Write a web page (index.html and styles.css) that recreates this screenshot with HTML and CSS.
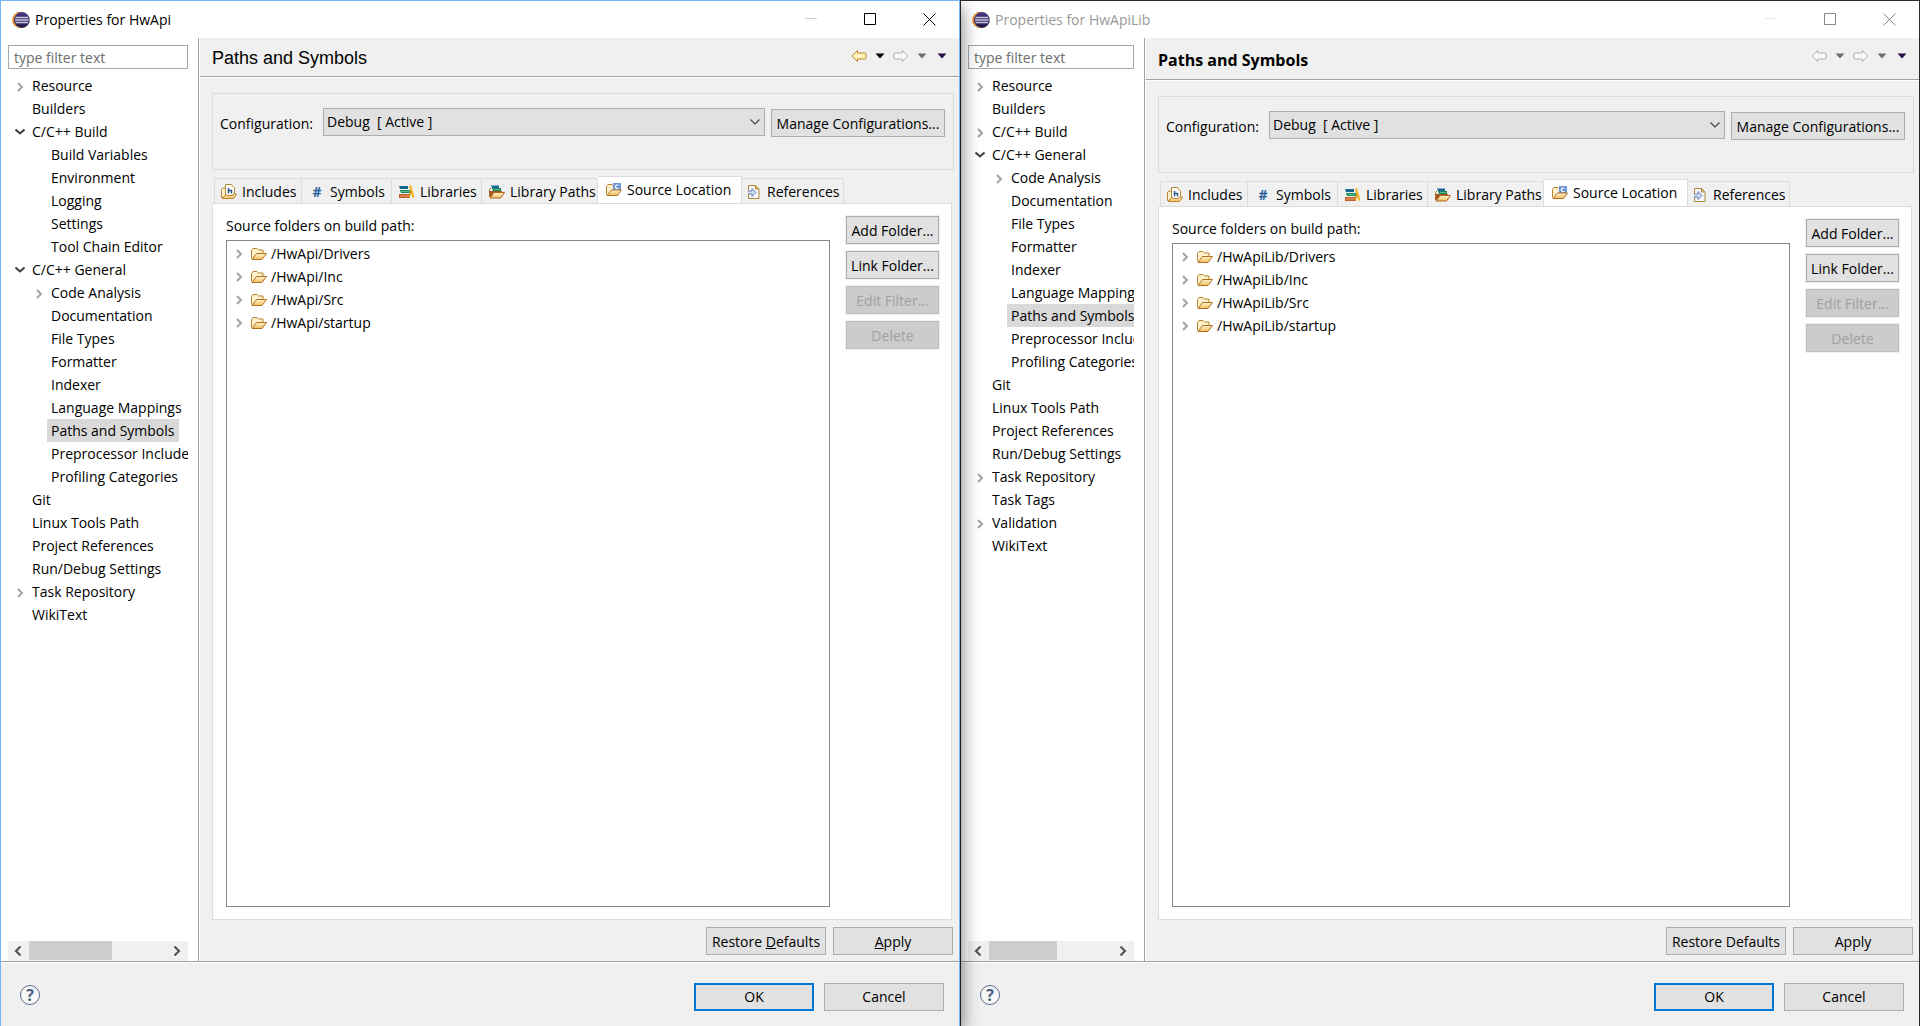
FILE: index.html
```html
<!DOCTYPE html>
<html lang="en">
<head>
<meta charset="utf-8">
<title>Properties</title>
<link rel="stylesheet" href="styles.css">
</head>
<body>
<svg class="sprite" aria-hidden="true">
  <defs>
    <linearGradient id="gold" x1="0" y1="0" x2="0" y2="1"><stop offset="0" stop-color="#fff3cf"/><stop offset="1" stop-color="#f0bd5e"/></linearGradient>
    <linearGradient id="globe" x1="0" y1="0" x2="0" y2="1"><stop offset="0" stop-color="#4a3c80"/><stop offset="1" stop-color="#241a48"/></linearGradient>
  </defs>
  <symbol id="eclipse" viewBox="0 0 18 18">
    <circle cx="8.500" cy="9" r="8.300" fill="#f08a1d"/><circle cx="10" cy="9" r="8" fill="#fbe3c4"/><circle cx="9.800" cy="9" r="7.900" fill="url(#globe)"/>
    <path d="M3.500 6.500h12.600M3 9h13.600M3.500 11.500h12.600" stroke="#c9c9e2" stroke-width="1.300"/>
  </symbol>
  <symbol id="right" viewBox="0 0 8 10"><path d="M2 1l4 4-4 4" fill="none" stroke="#a3a3a3" stroke-width="2"/></symbol>
  <symbol id="down" viewBox="0 0 10 8"><path d="M0.500 1.500l4.500 4 4.500-4" fill="none" stroke="#404040" stroke-width="2"/></symbol>
  <symbol id="scroll-left" viewBox="0 0 8 10"><path d="M6.500 0.500L2 5l4.500 4.500" fill="none" stroke="#555" stroke-width="2.200"/></symbol>
  <symbol id="scroll-right" viewBox="0 0 8 10"><path d="M1.500 0.500L6 5 1.500 9.500" fill="none" stroke="#555" stroke-width="2.200"/></symbol>
  <symbol id="arrow-back" viewBox="0 0 16 12"><path d="M1 6l5.500-5.500v2.500h7.500q1 0 1 1v4q0 1-1 1H6.500v2.500z" stroke-linejoin="round"/></symbol>
  <symbol id="arrow-fwd" viewBox="0 0 16 12"><path d="M15 6L9.500 0.500v2.500H2q-1 0-1 1v4q0 1 1 1h7.500v2.500z" stroke-linejoin="round"/></symbol>
  <symbol id="caret" viewBox="0 0 10 6"><path d="M0.500 0.500h9L5 5.500z"/></symbol>
  <symbol id="folder" viewBox="0 0 16 12">
    <path d="M0.500 10.500V2.500L2 0.500h4l1.500 1.500h4.500v3" fill="#fdf0cd" stroke="#b98228"/>
    <path d="M1 11.500h10l4.500-6H5.500z" fill="url(#gold)" stroke="#b0701e" stroke-linejoin="round"/>
  </symbol>
  <symbol id="includes" viewBox="0 0 16 16">
    <path d="M0.500 13.500V5.500l1.500-1.500h3v9z" fill="#fdf0cd" stroke="#b98228"/>
    <path d="M4.500 11.500V0.500h6l3 3v8z" fill="#fff" stroke="#b0893a"/><path d="M10.500 0.500v3h3z" fill="#e9cf95"/>
    <path d="M7.500 4v5.500M7.500 6.500h3v3" fill="none" stroke="#31588c" stroke-width="1.500"/>
    <path d="M1.500 14.500h11l3-4.500h-3l-1 1.500H6L5 10z" fill="url(#gold)" stroke="#b98228" stroke-linejoin="round"/>
  </symbol>
  <symbol id="libraries" viewBox="0 0 16 14">
    <path d="M0 1h9v3H1z" fill="#17658f"/><path d="M1 5h10v3H2z" fill="#178a55"/><path d="M3 6.500h7" stroke="#5fbf8f"/><path d="M0 9h11v4H0z" fill="#c0622c"/><path d="M1 11h9" stroke="#eea36e"/>
    <path d="M10 1l2-1 3.500 12-2 1z" fill="#f3b322"/><path d="M10 12l2-6" fill="none" stroke="#de9213" stroke-width="1.600"/>
  </symbol>
  <symbol id="libpaths" viewBox="0 0 16 14">
    <path d="M2 0.500h8v2.500H3z" fill="#176a9b"/><path d="M3 3h9v3H4z" fill="#168451"/><path d="M5 4.500h6" stroke="#5fbf8f"/>
    <path d="M0.500 12V4.500L2 3" fill="none" stroke="#b0651d"/><path d="M1 12V6h12v2" fill="#9f572c"/>
    <path d="M1 13h10.500l4-5.500H5z" fill="url(#gold)" stroke="#b0651d" stroke-linejoin="round"/>
  </symbol>
  <symbol id="source" viewBox="0 0 16 14">
    <path d="M0.500 11.500V3.500L2 1.500h4l1.500 1.500h5v4" fill="#fdf0cd" stroke="#b98228"/>
    <path d="M7 0h8v7H7z" fill="#6f97d8"/><path d="M12.500 2H10.500L9.500 3v1.500l1 1h2" fill="none" stroke="#fff" stroke-width="1.200"/>
    <path d="M1 12.500h10.500l4-5.500H5.500z" fill="url(#gold)" stroke="#b0701e" stroke-linejoin="round"/>
  </symbol>
  <symbol id="references" viewBox="0 0 12 14">
    <path d="M0.500 0.500h7l3.500 3.500v9.500H0.500z" fill="#f4f7fd" stroke="#ad8734"/><path d="M7.500 0.500v3.500h3.500z" fill="#f0d48c" stroke="#ad8734"/>
    <path d="M0 6h4V3.500L8 7.500l-4 4V9H0" fill="#cfdbf0" stroke="#6b83b0"/>
  </symbol>
  <symbol id="chevron" viewBox="0 0 10 6"><path d="M0.500 0.500L5 5 9.500 0.500" fill="none" stroke="#444" stroke-width="1.200"/></symbol>
  <symbol id="minimize" viewBox="0 0 13 13"><path d="M0 5.500h12" fill="none"/></symbol>
  <symbol id="maximize" viewBox="0 0 13 13"><path d="M0.500 0.500h11v11H0.500z" fill="none"/></symbol>
  <symbol id="close" viewBox="0 0 13 13"><path d="M0.500 0.500l12 12M12.500 0.500l-12 12" fill="none"/></symbol>
</svg>

<main class="desktop">
<section class="window window--active" aria-label="Properties for HwApi">
  <header class="titlebar">
    <svg class="app-icon"><use href="#eclipse"/></svg>
    <h1 class="window-title">Properties for HwApi</h1>
    <div class="window-controls">
      <button class="control control--off" aria-label="Minimize"><svg><use href="#minimize"/></svg></button>
      <button class="control" aria-label="Maximize"><svg><use href="#maximize"/></svg></button>
      <button class="control" aria-label="Close"><svg><use href="#close"/></svg></button>
    </div>
  </header>
  <div class="body">
    <nav class="sidebar">
      <input class="filter" type="text" placeholder="type filter text" aria-label="Filter">
      <ul class="tree">
        <li><span class="node"><svg class="twisty"><use href="#right"/></svg><span class="name">Resource</span></span></li>
        <li><span class="node"><span class="name">Builders</span></span></li>
        <li><span class="node"><svg class="twisty twisty--open"><use href="#down"/></svg><span class="name">C/C++ Build</span></span>
          <ul>
            <li><span class="node"><span class="name">Build Variables</span></span></li>
            <li><span class="node"><span class="name">Environment</span></span></li>
            <li><span class="node"><span class="name">Logging</span></span></li>
            <li><span class="node"><span class="name">Settings</span></span></li>
            <li><span class="node"><span class="name">Tool Chain Editor</span></span></li>
          </ul>
        </li>
        <li><span class="node"><svg class="twisty twisty--open"><use href="#down"/></svg><span class="name">C/C++ General</span></span>
          <ul>
            <li><span class="node"><svg class="twisty"><use href="#right"/></svg><span class="name">Code Analysis</span></span></li>
            <li><span class="node"><span class="name">Documentation</span></span></li>
            <li><span class="node"><span class="name">File Types</span></span></li>
            <li><span class="node"><span class="name">Formatter</span></span></li>
            <li><span class="node"><span class="name">Indexer</span></span></li>
            <li><span class="node"><span class="name">Language Mappings</span></span></li>
            <li><span class="node"><span class="name name--selected">Paths and Symbols</span></span></li>
            <li><span class="node"><span class="name">Preprocessor Include</span></span></li>
            <li><span class="node"><span class="name">Profiling Categories</span></span></li>
          </ul>
        </li>
        <li><span class="node"><span class="name">Git</span></span></li>
        <li><span class="node"><span class="name">Linux Tools Path</span></span></li>
        <li><span class="node"><span class="name">Project References</span></span></li>
        <li><span class="node"><span class="name">Run/Debug Settings</span></span></li>
        <li><span class="node"><svg class="twisty"><use href="#right"/></svg><span class="name">Task Repository</span></span></li>
        <li><span class="node"><span class="name">WikiText</span></span></li>
      </ul>
      <div class="scrollbar">
        <button class="scroll-button" aria-label="Scroll left"><svg><use href="#scroll-left"/></svg></button>
        <div class="track"><div class="thumb" style="width: 60%"></div></div>
        <button class="scroll-button" aria-label="Scroll right"><svg><use href="#scroll-right"/></svg></button>
      </div>
    </nav>
    <div class="page">
      <div class="page-header">
        <h2 class="page-title">Paths and Symbols</h2>
        <div class="history">
          <button class="nav nav--gold" aria-label="Back"><svg><use href="#arrow-back"/></svg></button>
          <button class="drop" aria-label="Back history"><svg><use href="#caret"/></svg></button>
          <button class="nav" aria-label="Forward" disabled><svg><use href="#arrow-fwd"/></svg></button>
          <button class="drop drop--off" aria-label="Forward history" disabled><svg><use href="#caret"/></svg></button>
          <button class="drop drop--menu" aria-label="Menu"><svg><use href="#caret"/></svg></button>
        </div>
      </div>
      <div class="page-content">
        <div class="group">
          <label class="config-label" for="config-1">Configuration:</label>
          <div class="combo"><select id="config-1"><option>Debug&nbsp; [ Active ]</option></select><svg><use href="#chevron"/></svg></div>
          <button class="button button--manage">Manage Configurations...</button>
        </div>
        <div class="tabs" role="tablist">
          <button class="tab tab--includes" role="tab"><svg><use href="#includes"/></svg>Includes</button>
          <button class="tab tab--symbols" role="tab"><span class="hash">#</span>Symbols</button>
          <button class="tab tab--libraries" role="tab"><svg><use href="#libraries"/></svg>Libraries</button>
          <button class="tab tab--paths" role="tab"><svg><use href="#libpaths"/></svg>Library Paths</button>
          <button class="tab tab--source tab--active" role="tab" aria-selected="true"><svg><use href="#source"/></svg>Source Location</button>
          <button class="tab tab--references" role="tab"><svg><use href="#references"/></svg>References</button>
        </div>
        <div class="panel" role="tabpanel">
          <div class="folders">
            <p class="caption">Source folders on build path:</p>
            <ul class="folder-list">
              <li><svg class="twisty"><use href="#right"/></svg><svg class="folder"><use href="#folder"/></svg>/HwApi/Drivers</li>
              <li><svg class="twisty"><use href="#right"/></svg><svg class="folder"><use href="#folder"/></svg>/HwApi/Inc</li>
              <li><svg class="twisty"><use href="#right"/></svg><svg class="folder"><use href="#folder"/></svg>/HwApi/Src</li>
              <li><svg class="twisty"><use href="#right"/></svg><svg class="folder"><use href="#folder"/></svg>/HwApi/startup</li>
            </ul>
          </div>
          <div class="side-buttons">
            <button class="button">Add Folder...</button>
            <button class="button">Link Folder...</button>
            <button class="button" disabled>Edit Filter...</button>
            <button class="button" disabled>Delete</button>
          </div>
        </div>
        <div class="page-actions">
          <button class="button button--wide">Restore <u>D</u>efaults</button>
          <button class="button button--wide"><u>A</u>pply</button>
        </div>
      </div>
    </div>
  </div>
  <footer class="footer">
    <button class="help" aria-label="Help">?</button>
    <button class="button button--wide button--default">OK</button>
    <button class="button button--wide">Cancel</button>
  </footer>
</section>

<section class="window window--inactive" aria-label="Properties for HwApiLib">
  <header class="titlebar">
    <svg class="app-icon"><use href="#eclipse"/></svg>
    <h1 class="window-title">Properties for HwApiLib</h1>
    <div class="window-controls">
      <button class="control control--off" aria-label="Minimize"><svg><use href="#minimize"/></svg></button>
      <button class="control" aria-label="Maximize"><svg><use href="#maximize"/></svg></button>
      <button class="control" aria-label="Close"><svg><use href="#close"/></svg></button>
    </div>
  </header>
  <div class="body">
    <nav class="sidebar">
      <input class="filter" type="text" placeholder="type filter text" aria-label="Filter">
      <ul class="tree">
        <li><span class="node"><svg class="twisty"><use href="#right"/></svg><span class="name">Resource</span></span></li>
        <li><span class="node"><span class="name">Builders</span></span></li>
        <li><span class="node"><svg class="twisty"><use href="#right"/></svg><span class="name">C/C++ Build</span></span></li>
        <li><span class="node"><svg class="twisty twisty--open"><use href="#down"/></svg><span class="name">C/C++ General</span></span>
          <ul>
            <li><span class="node"><svg class="twisty"><use href="#right"/></svg><span class="name">Code Analysis</span></span></li>
            <li><span class="node"><span class="name">Documentation</span></span></li>
            <li><span class="node"><span class="name">File Types</span></span></li>
            <li><span class="node"><span class="name">Formatter</span></span></li>
            <li><span class="node"><span class="name">Indexer</span></span></li>
            <li><span class="node"><span class="name">Language Mappings</span></span></li>
            <li><span class="node"><span class="name name--selected">Paths and Symbols</span></span></li>
            <li><span class="node"><span class="name">Preprocessor Include</span></span></li>
            <li><span class="node"><span class="name">Profiling Categories</span></span></li>
          </ul>
        </li>
        <li><span class="node"><span class="name">Git</span></span></li>
        <li><span class="node"><span class="name">Linux Tools Path</span></span></li>
        <li><span class="node"><span class="name">Project References</span></span></li>
        <li><span class="node"><span class="name">Run/Debug Settings</span></span></li>
        <li><span class="node"><svg class="twisty"><use href="#right"/></svg><span class="name">Task Repository</span></span></li>
        <li><span class="node"><span class="name">Task Tags</span></span></li>
        <li><span class="node"><svg class="twisty"><use href="#right"/></svg><span class="name">Validation</span></span></li>
        <li><span class="node"><span class="name">WikiText</span></span></li>
      </ul>
      <div class="scrollbar">
        <button class="scroll-button" aria-label="Scroll left"><svg><use href="#scroll-left"/></svg></button>
        <div class="track"><div class="thumb" style="width: 55%"></div></div>
        <button class="scroll-button" aria-label="Scroll right"><svg><use href="#scroll-right"/></svg></button>
      </div>
    </nav>
    <div class="page">
      <div class="page-header">
        <h2 class="page-title">Paths and Symbols</h2>
        <div class="history">
          <button class="nav" aria-label="Back" disabled><svg><use href="#arrow-back"/></svg></button>
          <button class="drop drop--off" aria-label="Back history" disabled><svg><use href="#caret"/></svg></button>
          <button class="nav" aria-label="Forward" disabled><svg><use href="#arrow-fwd"/></svg></button>
          <button class="drop drop--off" aria-label="Forward history" disabled><svg><use href="#caret"/></svg></button>
          <button class="drop drop--menu" aria-label="Menu"><svg><use href="#caret"/></svg></button>
        </div>
      </div>
      <div class="page-content">
        <div class="group">
          <label class="config-label" for="config-2">Configuration:</label>
          <div class="combo"><select id="config-2"><option>Debug&nbsp; [ Active ]</option></select><svg><use href="#chevron"/></svg></div>
          <button class="button button--manage">Manage Configurations...</button>
        </div>
        <div class="tabs" role="tablist">
          <button class="tab tab--includes" role="tab"><svg><use href="#includes"/></svg>Includes</button>
          <button class="tab tab--symbols" role="tab"><span class="hash">#</span>Symbols</button>
          <button class="tab tab--libraries" role="tab"><svg><use href="#libraries"/></svg>Libraries</button>
          <button class="tab tab--paths" role="tab"><svg><use href="#libpaths"/></svg>Library Paths</button>
          <button class="tab tab--source tab--active" role="tab" aria-selected="true"><svg><use href="#source"/></svg>Source Location</button>
          <button class="tab tab--references" role="tab"><svg><use href="#references"/></svg>References</button>
        </div>
        <div class="panel" role="tabpanel">
          <div class="folders">
            <p class="caption">Source folders on build path:</p>
            <ul class="folder-list">
              <li><svg class="twisty"><use href="#right"/></svg><svg class="folder"><use href="#folder"/></svg>/HwApiLib/Drivers</li>
              <li><svg class="twisty"><use href="#right"/></svg><svg class="folder"><use href="#folder"/></svg>/HwApiLib/Inc</li>
              <li><svg class="twisty"><use href="#right"/></svg><svg class="folder"><use href="#folder"/></svg>/HwApiLib/Src</li>
              <li><svg class="twisty"><use href="#right"/></svg><svg class="folder"><use href="#folder"/></svg>/HwApiLib/startup</li>
            </ul>
          </div>
          <div class="side-buttons">
            <button class="button">Add Folder...</button>
            <button class="button">Link Folder...</button>
            <button class="button" disabled>Edit Filter...</button>
            <button class="button" disabled>Delete</button>
          </div>
        </div>
        <div class="page-actions">
          <button class="button button--wide">Restore Defaults</button>
          <button class="button button--wide">Apply</button>
        </div>
      </div>
    </div>
  </div>
  <footer class="footer">
    <button class="help" aria-label="Help">?</button>
    <button class="button button--wide button--default">OK</button>
    <button class="button button--wide">Cancel</button>
  </footer>
</section>
</main>
</body>
</html>
```
FILE: styles.css
```css
* {
  box-sizing: border-box;
}

body {
  margin: 0;
  background: #f0f0f0;
  color: #000;
  font: 14px/20px "Open Sans", "Noto Sans", sans-serif;
}

ul {
  margin: 0;
  padding: 0;
  list-style: none;
}

button,
input,
select {
  padding: 0;
  border: 0;
  border-radius: 0;
  background: none;
  color: inherit;
  font: inherit;
}

.sprite {
  display: block;
  width: 0;
  height: 0;
}

.desktop {
  display: grid;
  grid-template-columns: 1fr 1fr;
  min-height: 100vh;
  overflow: hidden;
}

/* Windows */

.window {
  display: flex;
  flex-direction: column;
  min-width: 0;
  border: 1px solid #2b2b2f;
  border-bottom: 0;
  background: #f0f0f0;
}

.window--active {
  position: relative;
  z-index: 1;
  border-color: #78b4f5;
  box-shadow: 0 8px 18px rgba(0, 0, 0, 0.6);
}

.titlebar {
  display: flex;
  align-items: center;
  height: 37px;
  padding: 0 23px 0 11px;
  background: #fff;
}

.app-icon {
  width: 18px;
  height: 18px;
}

.window-title {
  flex: 1;
  margin: 0 0 0 5px;
  font-size: 14px;
  font-weight: 400;
}

.window-controls {
  display: flex;
  gap: 46px;
}

.control {
  width: 13px;
  height: 13px;
  stroke: #000;
}

.control svg,
.nav svg,
.drop svg {
  display: block;
  width: 100%;
  height: 100%;
}

.control--off {
  stroke: #ccc;
}

.window--inactive .window-title {
  color: #999;
}

.window--inactive .control {
  stroke: #888;
}

.window--inactive .control--off {
  stroke: #e8e8e8;
}

.body {
  display: flex;
  flex: 1;
  border-bottom: 1px solid #a0a0a0;
}

/* Sidebar */

.sidebar {
  display: flex;
  flex: none;
  flex-direction: column;
  width: 198px;
  padding: 7px 10px 0 7px;
  border-right: 1px solid #a0a0a0;
  background: #fff;
}

.window--inactive .sidebar {
  width: 184px;
}

.filter {
  width: 100%;
  height: 24px;
  padding: 0 5px;
  border: 1px solid #a5a8b0;
  background: #fff;
}

.filter::placeholder {
  color: #6d6d6d;
  opacity: 1;
}

.tree {
  flex: 1;
  padding: 5px 0 0 5px;
  overflow: hidden;
  white-space: nowrap;
}

.tree ul {
  padding-left: 19px;
}

.node {
  display: flex;
  align-items: center;
  height: 23px;
  padding-left: 15px;
}

.name {
  flex: none;
  padding: 0 4px;
  line-height: 23px;
}

.name--selected {
  background: #d9d9d9;
}

.twisty {
  flex: none;
  width: 8px;
  height: 10px;
  margin: 2px 4px 0 -12px;
}

.twisty--open {
  width: 10px;
  height: 8px;
  margin: 0 3px 0 -13px;
}

.scrollbar {
  display: flex;
  height: 20px;
  background: #f0f0f0;
}

.scroll-button {
  display: grid;
  place-items: center;
  width: 21px;
  padding: 0 2px 0 0;
}

.scroll-button svg {
  width: 8px;
  height: 10px;
}

.track {
  flex: 1;
}

.thumb {
  height: 19px;
  background: #cdcdcd;
}

/* Page */

.page {
  display: flex;
  flex: 1;
  flex-direction: column;
  min-width: 0;
  border-left: 1px solid #fff;
}

.page-header {
  display: flex;
  justify-content: space-between;
  height: 39px;
  padding: 0 12px;
  border-bottom: 1px solid #a0a0a0;
  box-shadow: 0 1px 0 #fff;
}

.page-title {
  margin: 0;
  font: 400 18px/40px "Liberation Sans", sans-serif;
}

.window--inactive .page-header {
  height: 42px;
}

.window--inactive .page-title {
  font: 700 16px/44px "Open Sans", "Noto Sans", sans-serif;
}

.history {
  display: flex;
  align-items: center;
  gap: 8px;
  height: 36px;
}

.nav {
  width: 16px;
  height: 12px;
  fill: #fafafa;
  stroke: #b4b4b4;
}

.nav--gold {
  fill: #fff3bf;
  stroke: #c08418;
}

.drop {
  width: 10px;
  height: 6px;
  fill: #000;
}

.drop--off {
  fill: #6e6e73;
}

.drop--menu {
  margin-left: 2px;
  fill: #2a1245;
}

.page-content {
  display: flex;
  flex: 1;
  flex-direction: column;
  padding: 16px 5px 6px 12px;
}

.group {
  display: flex;
  align-items: flex-start;
  gap: 6px;
  height: 77px;
  padding: 14px 8px 0 7px;
  border: 1px solid #dcdcdc;
}

.config-label {
  width: 97px;
  line-height: 32px;
}

.combo {
  display: grid;
  flex: 1;
  align-items: center;
}

.combo select,
.combo svg {
  grid-area: 1 / 1;
}

.combo select {
  width: 100%;
  height: 28px;
  padding: 0 3px;
  border: 1px solid #adadad;
  background: #e1e1e1;
  appearance: none;
}

.combo svg {
  justify-self: end;
  width: 10px;
  height: 6px;
  margin-right: 5px;
  pointer-events: none;
}

.button {
  height: 28px;
  padding-top: 1px;
  border: 1px solid #adadad;
  background: #e1e1e1;
  text-align: center;
  white-space: nowrap;
}

.button:disabled {
  border-color: #bfbfbf;
  background: #ccc;
  color: #a0a0a0;
}

.button--manage {
  width: 174px;
  margin-top: 1px;
}

.button--wide {
  width: 120px;
}

.button--default {
  padding-top: 0;
  border: 2px solid #0078d7;
}

/* Tabs */

.tabs {
  display: flex;
  align-items: flex-end;
  margin-top: 6px;
  padding-left: 2px;
}

.tab {
  display: flex;
  align-items: center;
  gap: 5px;
  width: 90px;
  height: 25px;
  padding: 1px 0 0 7px;
  border: 1px solid #dcdcdc;
  border-width: 1px 1px 0 0;
  white-space: nowrap;
}

.tab svg {
  flex: none;
  width: 16px;
  height: 14px;
}

.tab--includes {
  width: 88px;
  padding-left: 6px;
  border-left-width: 1px;
}

.tab--includes svg {
  height: 16px;
}

.tab--paths {
  width: 116px;
}

.tab--source {
  width: 144px;
}

.tab--references {
  gap: 7px;
  width: 102px;
  padding-left: 6px;
}

.tab--references svg {
  width: 12px;
}

.tab--active {
  height: 28px;
  margin-bottom: -1px;
  padding: 0 0 2px 8px;
  background: #fff;
}

.hash {
  width: 16px;
  color: #2a629c;
  font-weight: 700;
  text-align: center;
}

.panel {
  display: flex;
  flex: 1;
  gap: 16px;
  margin-right: 2px;
  padding: 12px 12px 12px 13px;
  border: 1px solid #dcdcdc;
  background: #fff;
}

.folders {
  display: flex;
  flex: 1;
  flex-direction: column;
}

.caption {
  margin: 0 0 4px;
}

.folder-list {
  flex: 1;
  padding: 1px 8px;
  border: 1px solid #828790;
}

.folder-list li {
  display: flex;
  align-items: center;
  height: 23px;
}

.folder-list .twisty {
  margin: 0 8px 0 0;
}

.folder {
  width: 16px;
  height: 12px;
  margin-right: 4px;
}

.side-buttons {
  display: flex;
  flex-direction: column;
  gap: 7px;
  width: 93px;
}

.side-buttons .button {
  box-shadow: 0 0 0 1px #f0f0f0;
}

.page-actions {
  display: flex;
  justify-content: flex-end;
  gap: 7px;
  padding: 7px 1px 0 0;
}

/* Footer */

.footer {
  display: flex;
  align-items: center;
  gap: 10px;
  height: 64px;
  padding: 4px 15px 0 19px;
  border-top: 1px solid #fff;
}

.help {
  width: 20px;
  height: 20px;
  margin: 0 auto 4px 0;
  border: 1px solid #5b6b8d;
  border-radius: 50%;
  background: #f7f7f7;
  color: #4b5f86;
  font-size: 16px;
  font-weight: 700;
  line-height: 18px;
}
```
